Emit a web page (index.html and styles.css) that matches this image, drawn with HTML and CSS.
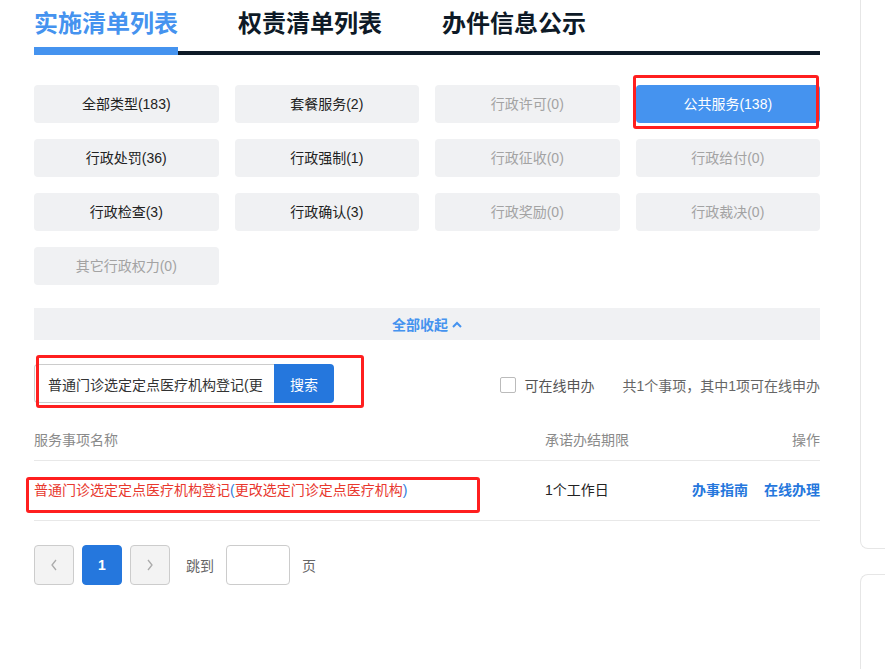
FILE: index.html
```html
<!DOCTYPE html>
<html lang="zh-CN">
<head>
<meta charset="utf-8">
<title>实施清单列表</title>
<link rel="stylesheet" href="styles.css">
</head>
<body>
<div class="page">
  <main class="main">
    <nav class="tabs">
      <a class="tab active">实施清单列表</a>
      <a class="tab">权责清单列表</a>
      <a class="tab">办件信息公示</a>
    </nav>

    <div class="types">
      <button class="type">全部类型(183)</button>
      <button class="type">套餐服务(2)</button>
      <button class="type off">行政许可(0)</button>
      <button class="type on">公共服务(138)<span class="mark mark-type"></span></button>
      <button class="type">行政处罚(36)</button>
      <button class="type">行政强制(1)</button>
      <button class="type off">行政征收(0)</button>
      <button class="type off">行政给付(0)</button>
      <button class="type">行政检查(3)</button>
      <button class="type">行政确认(3)</button>
      <button class="type off">行政奖励(0)</button>
      <button class="type off">行政裁决(0)</button>
      <button class="type off">其它行政权力(0)</button>
    </div>

    <div class="collapse">全部收起<svg class="chev-up" width="10" height="7" viewBox="0 0 10 7"><polyline points="1,6 5,2 9,6" fill="none" stroke="#4593ef" stroke-width="2"/></svg></div>

    <div class="toolbar">
      <div class="search">
        <input class="search-input" type="text" value="普通门诊选定定点医疗机构登记(更改选定门诊定点医疗机构)">
        <button class="search-btn">搜索</button>
        <span class="mark mark-search"></span>
      </div>
      <label class="online"><span class="checkbox"></span>可在线申办</label>
      <span class="summary">共1个事项，其中1项可在线申办</span>
    </div>

    <div class="table">
      <div class="thead">
        <span>服务事项名称</span>
        <span>承诺办结期限</span>
        <span class="op">操作</span>
      </div>
      <div class="trow">
        <div class="name"><span class="hl">普通门诊选定定点医疗机构登记</span><span class="par">(</span><span class="hl">更改选定门诊定点医疗机构</span><span class="par">)</span><span class="mark mark-row"></span></div>
        <div class="limit">1个工作日</div>
        <div class="ops"><a>办事指南</a><a>在线办理</a></div>
      </div>
    </div>

    <div class="pager">
      <button class="pg nav"><svg width="8" height="12" viewBox="0 0 8 12"><polyline points="6,1 2,6 6,11" fill="none" stroke="#aaa" stroke-width="1.3"/></svg></button>
      <button class="pg cur">1</button>
      <button class="pg nav"><svg width="8" height="12" viewBox="0 0 8 12"><polyline points="2,1 6,6 2,11" fill="none" stroke="#aaa" stroke-width="1.3"/></svg></button>
      <span class="jump">跳到</span>
      <input class="jump-input" type="text">
      <span class="jump-unit">页</span>
    </div>
  </main>

  <aside class="side">
    <div class="card card-top"></div>
    <div class="card card-bottom"></div>
  </aside>
</div>
</body>
</html>
```

FILE: styles.css
```css
html, body {
  margin: 0;
  padding: 0;
  overflow: hidden;
  background: #fff;
}
body {
  font-family: "Liberation Sans", "Noto Sans CJK SC", sans-serif;
  font-size: 14px;
  color: #333;
  width: 885px;
  height: 669px;
}
button, input {
  font-family: inherit;
  font-size: 14px;
}
.page {
  display: flex;
  align-items: flex-start;
}
.main {
  flex: none;
  width: 786px;
  padding-left: 34px;
}

/* tabs */
.tabs {
  display: flex;
  gap: 60px;
  border-bottom: 4px solid #0e1a27;
}
.tab {
  position: relative;
  font-size: 24px;
  font-weight: bold;
  line-height: 48px;
  padding-bottom: 3px;
  color: #0e1a27;
}
.tab.active {
  color: #4593ef;
}
.tab.active::after {
  content: "";
  position: absolute;
  left: 0;
  right: 0;
  bottom: -4px;
  height: 8px;
  background: #4593ef;
}

/* type buttons */
.types {
  margin-top: 30px;
  display: grid;
  grid-template-columns: repeat(4, 1fr);
  grid-auto-rows: 38px;
  gap: 16px;
}
.type {
  position: relative;
  border: 0;
  border-radius: 4px;
  background: #f0f1f3;
  color: #222;
  line-height: 38px;
  padding: 0;
  text-align: center;
}
.type.off {
  color: #a3a3a3;
}
.type.on {
  background: #4593ef;
  color: #fff;
}

/* annotation marks */
.mark {
  position: absolute;
  border: 3px solid #ff1f1f;
  border-radius: 3px;
  box-sizing: border-box;
  pointer-events: none;
}
.mark-type {
  left: -3px;
  top: -10px;
  width: 186px;
  height: 54px;
}
.mark-search {
  left: 2px;
  top: -9px;
  width: 328px;
  height: 53px;
}
.mark-row {
  left: -8px;
  top: 16px;
  width: 454px;
  height: 36px;
}

/* collapse */
.collapse {
  margin-top: 23px;
  height: 32px;
  background: #f0f1f3;
  display: flex;
  align-items: center;
  justify-content: center;
  gap: 4px;
  color: #4593ef;
  font-weight: bold;
  font-size: 14px;
}
.chev-up {
  display: block;
}

/* toolbar */
.toolbar {
  margin-top: 24px;
  height: 39px;
  display: flex;
  align-items: center;
}
.search {
  position: relative;
  display: flex;
  height: 39px;
}
.search-input {
  box-sizing: border-box;
  width: 240px;
  height: 39px;
  border: 1px solid #ccc;
  border-right: 0;
  border-radius: 4px 0 0 4px;
  padding: 0 11px 0 13px;
  color: #333;
  outline: none;
}
.search-btn {
  width: 60px;
  height: 39px;
  border: 0;
  border-radius: 0 4px 4px 0;
  background: #2577dd;
  color: #fff;
  padding: 0;
}
.online {
  margin-left: auto;
  display: flex;
  align-items: center;
  gap: 8px;
  color: #555;
  padding-top: 3px;
}
.checkbox {
  box-sizing: border-box;
  width: 16px;
  height: 16px;
  border: 1px solid #bbb;
  border-radius: 2px;
  background: #fff;
}
.summary {
  margin-left: 28px;
  color: #666;
  padding-top: 3px;
}

/* table */
.table {
  margin-top: 17px;
}
.thead, .trow {
  display: grid;
  grid-template-columns: 511px 1fr auto;
  border-bottom: 1px solid #e8e8e8;
}
.thead {
  height: 40px;
  line-height: 40px;
  color: #8a8a8a;
}
.trow {
  height: 59px;
  line-height: 59px;
}
.name {
  position: relative;
  white-space: nowrap;
}
.hl {
  color: #e8382e;
}
.par {
  color: #2f7bdc;
}
.limit {
  color: #222;
}
.ops {
  display: flex;
  gap: 16px;
}
.ops a {
  color: #2577dd;
  font-weight: bold;
}

/* pager */
.pager {
  margin-top: 24px;
  display: flex;
  align-items: center;
}
.pg {
  box-sizing: border-box;
  width: 40px;
  height: 40px;
  border-radius: 4px;
  padding: 0;
  display: flex;
  align-items: center;
  justify-content: center;
  margin-right: 8px;
}
.pg.nav {
  background: #f3f3f3;
  border: 1px solid #ccc;
}
.pg.cur {
  background: #2577dd;
  border: 1px solid #2577dd;
  color: #fff;
  font-weight: bold;
}
.jump {
  margin-left: 8px;
  color: #666;
}
.jump-input {
  box-sizing: border-box;
  margin-left: 12px;
  width: 64px;
  height: 40px;
  border: 1px solid #ccc;
  border-radius: 4px;
  outline: none;
}
.jump-unit {
  margin-left: 12px;
  color: #666;
}

/* right sidebar */
.side {
  flex: none;
  margin-left: 40px;
  width: 25px;
  display: flex;
  flex-direction: column;
  gap: 25px;
}
.card {
  box-sizing: border-box;
  border: 1px solid #e6e6e6;
  border-right: 0;
  background: #fff;
}
.card-top {
  height: 549px;
  border-top: 0;
  border-radius: 0 0 0 8px;
}
.card-bottom {
  height: 95px;
  border-bottom: 0;
  border-radius: 8px 0 0 0;
}
```
